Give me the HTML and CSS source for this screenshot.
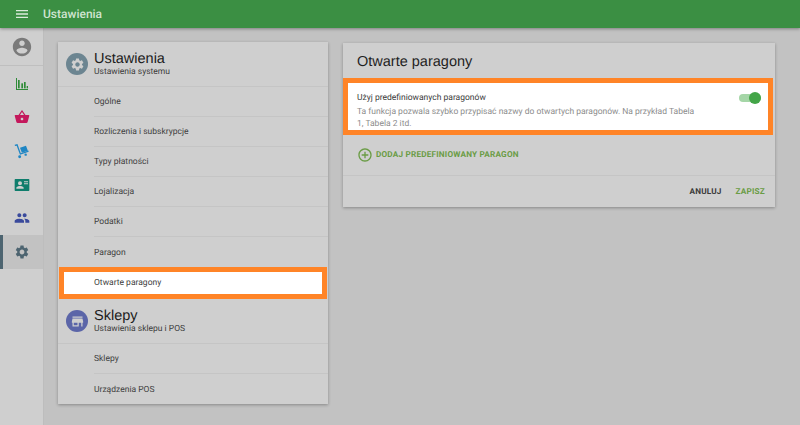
FILE: index.html
```html
<!DOCTYPE html>
<html lang="pl">
<head>
<meta charset="utf-8">
<title>Ustawienia</title>
<link rel="stylesheet" href="styles.css">
</head>
<body>
<div class="app">
  <header class="topbar">
    <svg class="menu-icon" viewBox="0 0 24 24"><path d="M3 18h18v-2H3v2zm0-5h18v-2H3v2zm0-7v2h18V6H3z"/></svg>
    <span class="topbar-title">Ustawienia</span>
  </header>
  <div class="body">
    <nav class="sidebar">
      <div class="side-avatar">
        <svg class="avatar-icon" viewBox="0 0 24 24"><path d="M12 2C6.48 2 2 6.48 2 12s4.480 10 10 10 10-4.480 10-10S17.520 2 12 2zm0 3c1.660 0 3 1.340 3 3s-1.340 3-3 3-3-1.340-3-3 1.340-3 3-3zm0 14.200c-2.500 0-4.710-1.280-6-3.220.030-1.990 4-3.080 6-3.080 1.990 0 5.970 1.090 6 3.080-1.290 1.940-3.500 3.220-6 3.220z"/></svg>
      </div>
      <div class="side-item">
        <svg class="side-icon green" viewBox="0 0 24 24"><path d="M3 3h1.500v16.500H21V21H3z"/><rect x="6" y="6" width="2.500" height="12.500"/><rect x="11" y="11" width="2.500" height="7.500"/><rect x="15" y="9" width="2.500" height="9.500"/><rect x="19" y="15" width="2" height="3.500"/></svg>
      </div>
      <div class="side-item">
        <svg class="side-icon pink" viewBox="0 0 24 24"><path d="M17.210 9l-4.380-6.560c-.190-.280-.510-.420-.830-.420-.320 0-.640.140-.830.430L6.790 9H2c-.550 0-1 .450-1 1 0 .090.010.180.040.270l2.540 9.270c.230.840 1 1.460 1.920 1.460h13c.920 0 1.690-.620 1.930-1.460l2.540-9.270L23 10c0-.550-.450-1-1-1h-4.790zM9 9l3-4.400L15 9H9zm3 8c-1.100 0-2-.900-2-2s.900-2 2-2 2 .900 2 2-.900 2-2 2z"/></svg>
      </div>
      <div class="side-item">
        <svg class="side-icon blue" viewBox="0 0 24 24"><path d="M1 2.500l4.200-.900 5 13.600 11.300-3.800.600 1.700-13.100 4.400L4 4 1.500 4.500z"/><circle cx="8.500" cy="20.500" r="2.200"/><circle cx="17.500" cy="17.500" r="1.800"/><path d="M9 7l9-3 2.800 7.600-9 3z"/></svg>
      </div>
      <div class="side-item">
        <svg class="side-icon teal" viewBox="0 0 24 24"><path fill-rule="evenodd" d="M2 3h20c.6 0 1 .4 1 1v16c0 .6-.4 1-1 1H2c-.6 0-1-.4-1-1V4c0-.6.400-1 1-1zm7 3.500a3 3 0 100 6 3 3 0 000-6zM3.500 17.500h11v-1.300c0-1.800-3.700-2.700-5.500-2.700s-5.500.9-5.500 2.700zM15 6.500v1.500h6V6.500zm0 3v1.500h6V9.500z"/></svg>
      </div>
      <div class="side-item">
        <svg class="side-icon indigo" viewBox="0 0 24 24"><path d="M16 11c1.660 0 2.990-1.340 2.990-3S17.660 5 16 5c-1.660 0-3 1.340-3 3s1.340 3 3 3zm-8 0c1.660 0 2.990-1.340 2.990-3S9.660 5 8 5C6.340 5 5 6.340 5 8s1.340 3 3 3zm0 2c-2.330 0-7 1.170-7 3.500V19h14v-2.500c0-2.330-4.670-3.500-7-3.500zm8 0c-.290 0-.620.020-.970.050 1.160.840 1.970 1.970 1.970 3.450V19h6v-2.500c0-2.330-4.670-3.500-7-3.500z"/></svg>
      </div>
      <div class="side-item side-item-active">
        <svg class="side-icon slate" viewBox="0 0 24 24"><path d="M19.140 12.940c.040-.300.060-.610.060-.940 0-.320-.020-.640-.070-.940l2.030-1.580c.180-.140.230-.410.120-.610l-1.920-3.320c-.120-.220-.370-.290-.590-.220l-2.390.960c-.500-.380-1.030-.700-1.620-.940l-.360-2.540c-.040-.240-.240-.410-.480-.410h-3.840c-.240 0-.430.170-.470.410l-.360 2.540c-.590.240-1.130.570-1.620.940l-2.390-.960c-.220-.080-.470 0-.590.220L2.740 8.870c-.120.210-.080.470.120.610l2.030 1.580c-.050.300-.090.630-.090.940s.020.640.070.940l-2.030 1.580c-.180.140-.230.410-.120.610l1.920 3.320c.120.220.370.290.590.220l2.390-.960c.500.380 1.030.700 1.620.940l.360 2.540c.050.240.240.410.480.410h3.840c.240 0 .440-.170.470-.410l.360-2.540c.590-.240 1.130-.560 1.620-.940l2.390.960c.220.080.470 0 .590-.220l1.920-3.320c.120-.220.070-.470-.120-.610l-2.010-1.580zM12 15.600c-1.980 0-3.600-1.620-3.600-3.600s1.620-3.600 3.600-3.600 3.600 1.620 3.600 3.600-1.620 3.600-3.600 3.600z"/></svg>
      </div>
    </nav>
    <main class="main">
      <section class="card settings-card">
        <div class="section-head">
          <span class="badge badge-slate">
            <svg class="badge-icon" viewBox="0 0 24 24"><path d="M19.140 12.940c.040-.300.060-.610.060-.940 0-.320-.020-.640-.070-.940l2.030-1.580c.180-.140.230-.410.120-.610l-1.920-3.320c-.120-.220-.370-.290-.590-.220l-2.390.960c-.500-.380-1.030-.700-1.620-.940l-.360-2.540c-.040-.240-.240-.410-.480-.410h-3.840c-.240 0-.430.170-.470.410l-.360 2.540c-.590.240-1.130.570-1.620.940l-2.390-.960c-.220-.080-.470 0-.590.220L2.740 8.870c-.120.210-.080.470.120.610l2.030 1.580c-.050.300-.090.630-.090.940s.020.640.070.940l-2.030 1.580c-.180.140-.230.410-.120.610l1.920 3.320c.120.220.370.290.590.220l2.390-.960c.500.380 1.030.700 1.620.940l.360 2.540c.050.240.240.410.480.410h3.840c.240 0 .440-.170.470-.410l.360-2.540c.590-.240 1.130-.560 1.620-.940l2.390.960c.220.080.470 0 .590-.220l1.920-3.320c.120-.220.070-.470-.120-.610l-2.010-1.580zM12 15.600c-1.980 0-3.600-1.620-3.600-3.600s1.620-3.600 3.600-3.600 3.600 1.620 3.600 3.600-1.620 3.600-3.600 3.600z"/></svg>
          </span>
          <div class="head-text">
            <div class="head-title">Ustawienia</div>
            <div class="head-sub">Ustawienia systemu</div>
          </div>
        </div>
        <ul class="rows">
          <li class="row">Ogólne</li>
          <li class="row">Rozliczenia i subskrypcje</li>
          <li class="row">Typy płatności</li>
          <li class="row">Lojalizacja</li>
          <li class="row">Podatki</li>
          <li class="row row-last">Paragon</li>
          <li class="row-highlight">Otwarte paragony</li>
        </ul>
        <div class="section-head">
          <span class="badge badge-indigo">
            <svg class="badge-icon" viewBox="0 0 24 24"><path d="M4 4h16v2H4zM20 7H4l-1 5v2h1v6h10v-6h4v6h2v-6h1v-2zM12 18H6v-4h6z"/></svg>
          </span>
          <div class="head-text">
            <div class="head-title">Sklepy</div>
            <div class="head-sub">Ustawienia sklepu i POS</div>
          </div>
        </div>
        <ul class="rows">
          <li class="row">Sklepy</li>
          <li class="row row-last">Urządzenia POS</li>
        </ul>
      </section>
      <section class="card detail-card">
        <h2 class="detail-title">Otwarte paragony</h2>
        <div class="option-box">
          <div class="option-text">
            <div class="option-title">Użyj predefiniowanych paragonów</div>
            <div class="option-desc">Ta funkcja pozwala szybko przypisać nazwy do otwartych paragonów. Na przykład Tabela 1, Tabela 2 itd.</div>
          </div>
          <span class="switch"><span class="switch-knob"></span></span>
        </div>
        <div class="add-row">
          <svg class="add-icon" viewBox="0 0 24 24"><path d="M13 7h-2v4H7v2h4v4h2v-4h4v-2h-4V7zm-1-5C6.480 2 2 6.480 2 12s4.480 10 10 10 10-4.480 10-10S17.520 2 12 2zm0 18c-4.410 0-8-3.590-8-8s3.590-8 8-8 8 3.590 8 8-3.590 8-8 8z"/></svg>
          <span class="add-label">DODAJ PREDEFINIOWANY PARAGON</span>
        </div>
        <div class="actions">
          <span class="action action-cancel">ANULUJ</span>
          <span class="action action-save">ZAPISZ</span>
        </div>
      </section>
    </main>
  </div>
</div>
</body>
</html>
```
FILE: styles.css
```css
* { box-sizing: border-box; }
html, body { margin: 0; padding: 0; }
body {
  width: 800px;
  height: 425px;
  overflow: hidden;
  background: #c2c2c2;
  font-family: Roboto, "Liberation Sans", sans-serif;
  color: #2a2a2a;
  text-rendering: geometricPrecision;
}
.app { display: flex; flex-direction: column; height: 425px; }
.topbar {
  height: 28px;
  flex: none;
  background: #3b8f43;
  display: flex;
  align-items: center;
  padding-left: 14px;
  box-shadow: 0 1px 3px rgba(0,0,0,.35);
  position: relative;
  z-index: 2;
}
.menu-icon { width: 16px; height: 16px; fill: #dcebdc; }
.topbar-title { margin-left: 13px; font-size: 12px; font-weight: 500; color: #cfe4d0; }
.body { display: flex; flex: 1; min-height: 0; }
.sidebar {
  width: 44px;
  flex: none;
  background: #cfcfcf;
  border-right: 1px solid #bdbdbd;
}
.side-avatar {
  height: 38px;
  display: flex;
  align-items: center;
  justify-content: center;
  border-bottom: 1px solid #bfbfbf;
  margin-bottom: 1px;
}
.avatar-icon { width: 22px; height: 22px; fill: #7a7a7a; }
.side-item {
  height: 33.600px;
  display: flex;
  align-items: center;
  justify-content: center;
}
.side-item-active { background: #c2c2c2; border-left: 3px solid #4d6470; padding-right: 3px; }
.side-icon { width: 16px; height: 16px; }
.green { fill: #2e8b37; }
.pink { fill: #c4185c; }
.blue { fill: #1f86c4; }
.teal { fill: #0f7d6c; }
.indigo { fill: #3a4a9c; }
.slate { fill: #4d6470; }
.main {
  flex: 1;
  display: flex;
  align-items: flex-start;
  gap: 15px;
  padding: 14px 0 0 14px;
}
.card {
  background: #cfcfcf;
  box-shadow: 0 1px 3px rgba(0,0,0,.3);
}
.settings-card { width: 270px; height: 362px; }
.detail-card { width: 432px; height: 164px; margin-top: 1px; position: relative; }
.section-head {
  height: 45px;
  display: flex;
  align-items: center;
  padding-left: 8px;
  border-bottom: 1px solid #c5c5c5;
}
.badge {
  width: 22px;
  height: 22px;
  border-radius: 50%;
  display: flex;
  align-items: center;
  justify-content: center;
  flex: none;
}
.badge-slate { background: #6c8591; }
.badge-indigo { background: #5b65a8; }
.badge-icon { width: 15px; height: 15px; fill: #cfcfcf; }
.head-text { margin-left: 6px; }
.head-title { font-family: "Liberation Sans", Arial, sans-serif; font-size: 14.500px; line-height: 16px; color: #1c1c1c; }
.head-sub { font-size: 8.500px; line-height: 10px; color: #3c3c3c; }
.rows { list-style: none; margin: 0; padding: 0; }
.row {
  height: 30px;
  margin-left: 36px;
  padding-top: 1px;
  display: flex;
  align-items: center;
  font-size: 8.500px;
  color: #404040;
  border-bottom: 1px solid #c5c5c5;
}
.row-last { border-bottom: 0; }
.row-highlight {
  height: 32px;
  margin: 0 1px;
  padding: 0 0 1px 30px;
  display: flex;
  align-items: center;
  background: #fff;
  border: 5px solid #ff8427;
  font-size: 8.500px;
  color: #404040;
}
.detail-title {
  margin: 0;
  height: 35px;
  padding: 11px 0 0 14px;
  font-family: "Liberation Sans", Arial, sans-serif;
  font-weight: 400;
  font-size: 14.500px;
  line-height: 17px;
  color: #1f1f1f;
}
.option-box {
  height: 57px;
  width: 430px;
  background: #fff;
  border: 5px solid #ff8427;
  display: flex;
  align-items: flex-start;
  padding: 10px 0 0 9px;
}
.option-text { width: 345px; }
.option-title { font-size: 8.500px; line-height: 11px; color: #3a3a3a; }
.option-desc { font-size: 8.500px; line-height: 12px; color: #8c8c8c; margin-top: 2px; }
.switch {
  margin: 1px 0 0 37px;
  width: 22px;
  height: 8px;
  border-radius: 4px;
  background: #a5d6a7;
  position: relative;
}
.switch-knob {
  position: absolute;
  right: 0;
  top: -2px;
  width: 12px;
  height: 12px;
  border-radius: 50%;
  background: #43a548;
}
.add-row {
  height: 41px;
  display: flex;
  align-items: center;
  padding: 0 0 1px 14px;
  border-bottom: 1px solid #c5c5c5;
}
.add-icon { width: 16px; height: 16px; fill: #6a9c45; }
.add-label { margin-left: 3px; font-size: 8.200px; font-weight: 700; letter-spacing: .2px; color: #6a9c45; }
.actions {
  height: 31px;
  display: flex;
  align-items: center;
  justify-content: flex-end;
  gap: 14px;
  padding-right: 10px;
}
.action { font-size: 8.200px; font-weight: 700; letter-spacing: .2px; }
.action-cancel { color: #3a3a3a; }
.action-save { color: #6a9c45; }
```
